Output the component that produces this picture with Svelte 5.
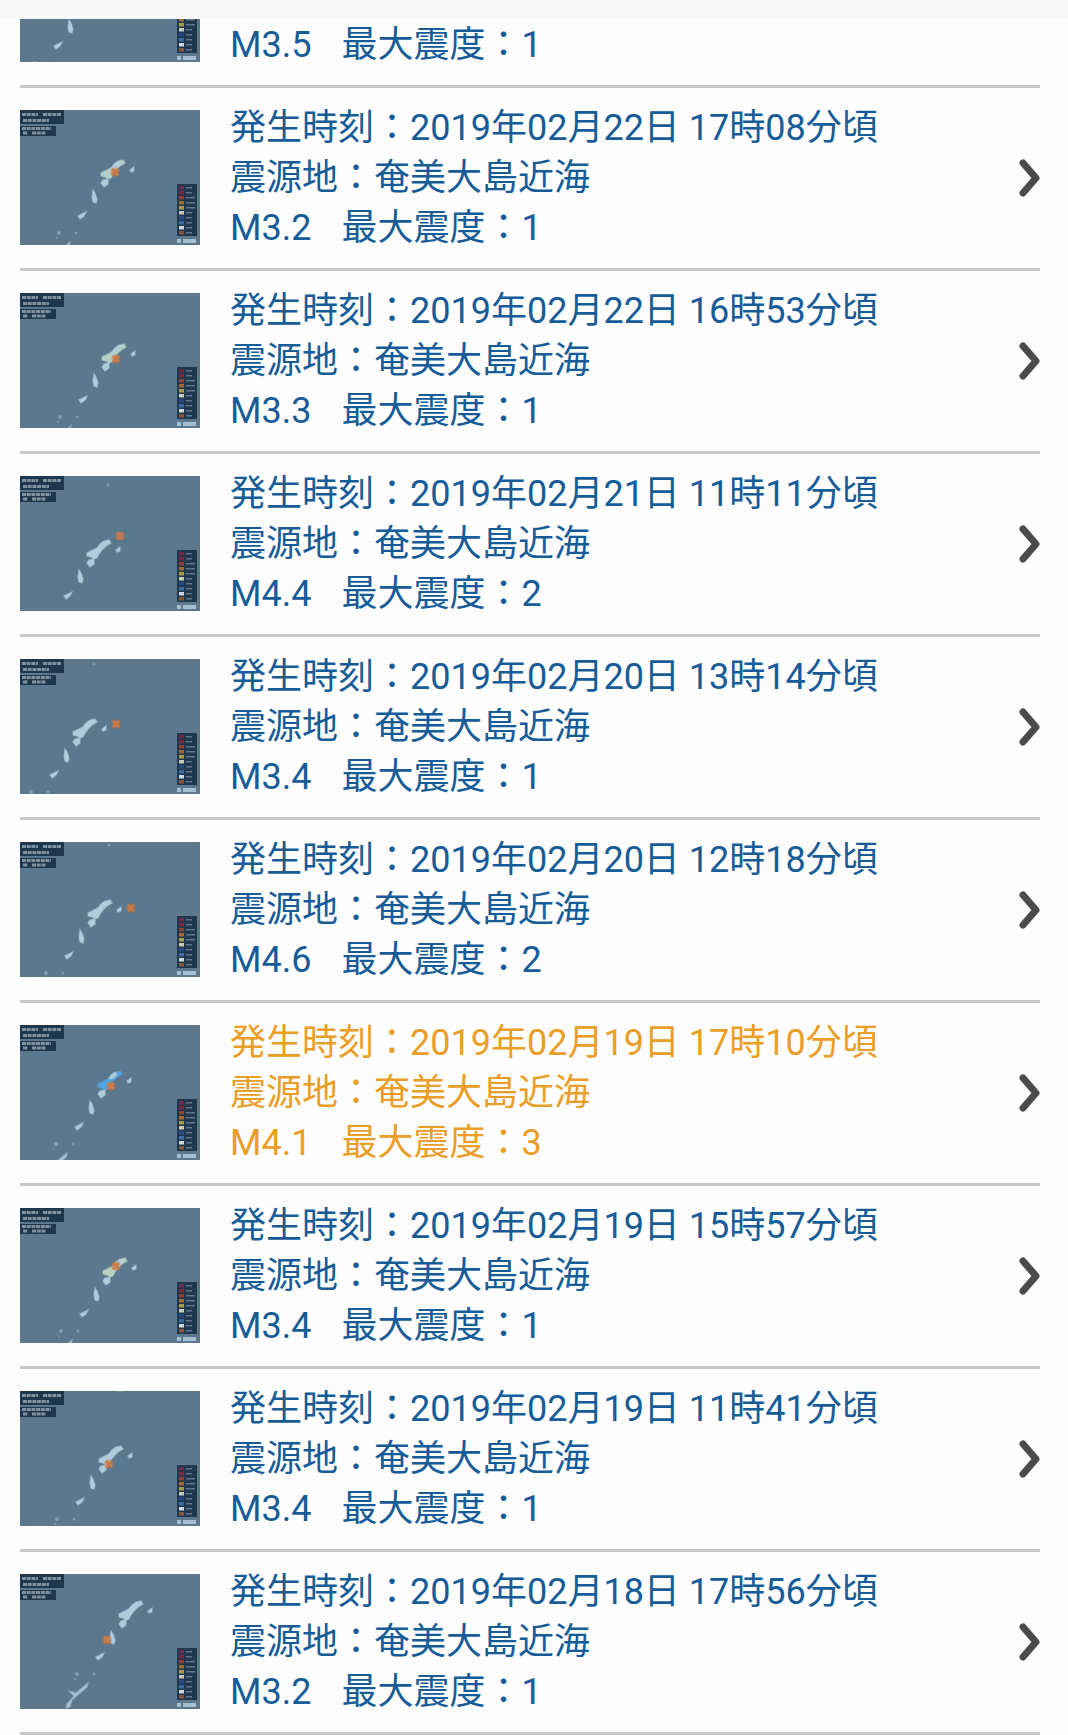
<script>
  // Earthquake history list. at/epi are positions inside the 180x135 map thumbnail:
  // at = Tokunoshima (the islands are laid out around it), epi = epicentre.
  const quakes = [
    { id: 0, mag: '3.5', max: 1, at: [50, 100], epi: null, cut: true },
    { id: 1, time: '2019年02月22日 17時08分頃', place: '奄美大島近海', mag: '3.2', max: 1, at: [74, 87], epi: [95, 62], tint: '#b4cfc8' },
    { id: 2, time: '2019年02月22日 16時53分頃', place: '奄美大島近海', mag: '3.3', max: 1, at: [75, 88], epi: [96, 66], tint: '#b4cfc8' },
    { id: 3, time: '2019年02月21日 11時11分頃', place: '奄美大島近海', mag: '4.4', max: 2, at: [60, 101], epi: [100, 60] },
    { id: 4, time: '2019年02月20日 13時14分頃', place: '奄美大島近海', mag: '3.4', max: 1, at: [46, 97], epi: [96, 65] },
    { id: 5, time: '2019年02月20日 12時18分頃', place: '奄美大島近海', mag: '4.6', max: 2, at: [61, 95], epi: [111, 66] },
    { id: 6, time: '2019年02月19日 17時10分頃', place: '奄美大島近海', mag: '4.1', max: 3, at: [71, 83], epi: [91, 61], tint: '#4fa3e3' },
    { id: 7, time: '2019年02月19日 15時57分頃', place: '奄美大島近海', mag: '3.4', max: 1, at: [76, 87], epi: [96, 58], tint: '#b9d2c4' },
    { id: 8, time: '2019年02月19日 11時41分頃', place: '奄美大島近海', mag: '3.4', max: 1, at: [72, 92], epi: [89, 73] },
    { id: 9, time: '2019年02月18日 17時56分頃', place: '奄美大島近海', mag: '3.2', max: 1, at: [92, 64], epi: [87, 66] },
  ];

  const scale = ['#6d2a4a', '#7e2a3e', '#934032', '#a3692f', '#ab9c4a', '#c9ccb4', '#234c88', '#3a6ca4', '#ced8de', '#8a563a'];
</script>

{#snippet map(q)}
  <svg class="map" class:cut={q.cut} viewBox={q.cut ? '0 92 180 43' : '0 0 180 135'} aria-hidden="true">
    <rect class="sea" width="180" height="135" />
    <g transform="translate({q.at[0]} {q.at[1]})">
      <g class="land">
        <path style:fill={q.tint} style:stroke={q.tint} d="M29 -37 L31 -34 L26 -31 L22 -27 L19 -23 L17 -19 L14 -18 L11 -20 L7 -21 L7 -24 L11 -26 L15 -28 L18 -30 L21 -33 L25 -36 Z" />
        <path d="M20 -33 L24 -36 L26 -33 L21 -29 L18 -30 Z" />
        <path d="M9 -17 L14 -18 L14 -13 L10 -10 L7 -14 Z" />
        <path d="M36 -27 L40 -30 L40 -26 L37 -25 Z" />
        <path d="M-1 -7 L1 -4 L3 2 L2 6 L-1 5 L-2 0 Z" />
        <path d="M-16 19 L-12 17 L-8 15 L-10 19 L-14 22 Z" />
      </g>
      <g class="land faint">
        <circle cx="-35" cy="36" r="1.5" />
        <circle cx="-18" cy="36" r="1" />
        <circle cx="-37" cy="41" r="0.5" />
        <circle cx="28" cy="-92" r="1" />
      </g>
      <path class="land okinawa" d="M-24 45 L-25 49 L-32 55 L-40 62 L-42 69 L-46 70 L-45 66 L-38 58 L-43 53 L-36 55 L-29 49 Z" />
    </g>
    {#if q.epi}
      <circle class="epi-ring" cx={q.epi[0]} cy={q.epi[1]} r="5" />
      <path class="epi" d="M-3 -3 L3 3 M3 -3 L-3 3" transform="translate({q.epi[0]} {q.epi[1]})" />
    {/if}

    <rect class="panel" width="44" height="14" />
    <path class="print" d="M2 4.5 H18 M23 4.5 H41 M3 10.5 H29" />
    <rect class="panel" y="16" width="36" height="10" />
    <path class="print" d="M2 18.5 H31 M3 23 H8 M12 23 H26" />

    <rect class="panel" x="157" y="74" width="20" height="52" />
    {#each scale as color, i}
      <rect x="159" y={76 + i * 5} width="5" height="3.5" fill={color} />
      <rect class="bar" x="166" y={77 + i * 5} width={i > 1 && i < 5 ? 9 : 6} height="1.5" />
    {/each}
    <path class="logo" d="M157 131 H161 M163 131 H176" />
  </svg>
{/snippet}

<div class="topbar"></div>
<ul class="list">
  {#each quakes as q (q.id)}
    <li>
      <a href="#quake-{q.id}" class="row" class:cut={q.cut} class:strong={q.max >= 3}>
        {@render map(q)}
        <div class="info">
          {#if !q.cut}
            <p>発生時刻：{q.time}</p>
            <p>震源地：{q.place}</p>
          {/if}
          <p class="level"><span>M{q.mag}</span><span>最大震度：{q.max}</span></p>
        </div>
        {#if !q.cut}
          <svg class="arrow" viewBox="0 0 21 40" aria-hidden="true"><path d="M4 5 L17 20 L4 35" /></svg>
        {/if}
      </a>
    </li>
  {/each}
</ul>

<style>
  :global(body) { margin: 0; background: #fdfdfd; }
  .topbar { height: 19px; background: #f8f8f8; }
  .list { list-style: none; margin: 0; padding: 0 28px 0 20px; }
  li { border-bottom: 3px solid #c8c8c8; }

  .row {
    display: flex;
    align-items: flex-start;
    gap: 30px;
    padding: 15px 0;
    color: #165c98;
    text-decoration: none;
    font: 36px/50px Roboto, "Noto Sans CJK JP", sans-serif;
  }
  .row.strong { color: #eb9e27; }
  .row.cut { padding-top: 0; }
  .row.cut .info { padding-top: 1px; }

  .info { flex: 1; min-width: 0; }
  p { margin: 0; }
  .level { display: flex; gap: 30px; }

  .map { flex: none; display: block; width: 180px; height: 135px; margin-top: 7px; }
  .map.cut { height: 43px; margin-top: 0; }
  .sea { fill: #5b788e; }
  .land { fill: #afcbdc; stroke: #afcbdc; stroke-opacity: 0.5; stroke-width: 1.5; }
  .faint { opacity: 0.5; }
  .okinawa { opacity: 0.85; }
  .panel { fill: #20384d; }
  .print { stroke: #7f909e; stroke-width: 3; stroke-dasharray: 4 0.7; fill: none; }
  .bar { fill: #627688; }
  .logo { stroke: #a4bfd0; stroke-width: 4; }
  .epi-ring { fill: #c9743d; opacity: 0.35; }
  .epi { stroke: #cb7a48; stroke-width: 3; }

  .arrow { flex: none; align-self: center; width: 21px; height: 40px; }
  .arrow path { fill: none; stroke: #4b4b4b; stroke-width: 7; stroke-linecap: round; stroke-linejoin: round; }
</style>
